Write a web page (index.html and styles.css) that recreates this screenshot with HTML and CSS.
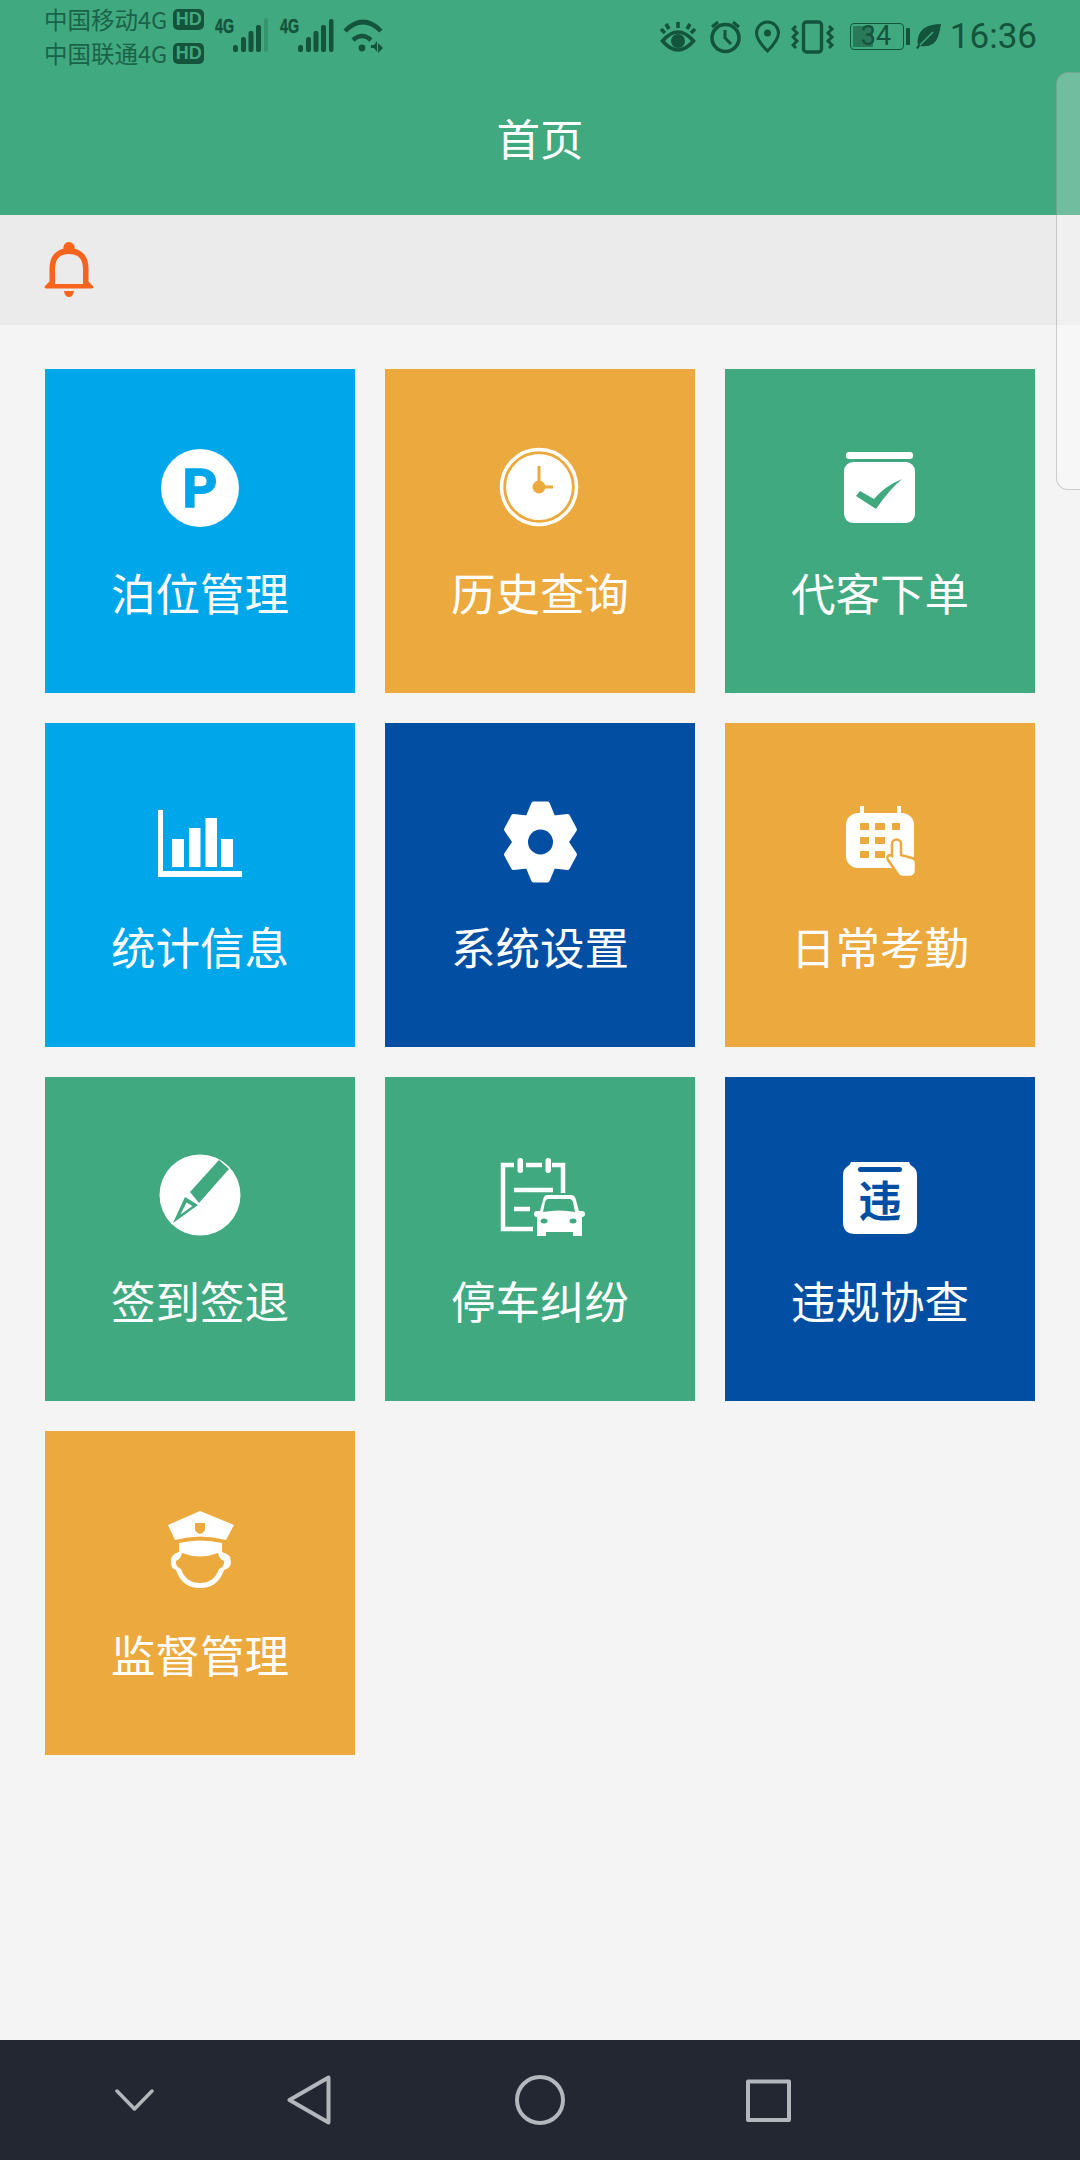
FILE: index.html
```html
<!DOCTYPE html>
<html>
<head>
    <title>首页</title>
    <meta charset="utf-8" />
    <link rel="stylesheet" href="styles.css">
</head>
<body>
    <div class="sayfa">
        <header class="ust">
            <div class="durum">
                <div class="operator">
                    <div class="hat"><span>中国移动4G</span><b class="hd">HD</b></div>
                    <div class="hat"><span>中国联通4G</span><b class="hd">HD</b></div>
                </div>
                <svg class="sinyal" width="170" height="40" viewBox="215 15 170 40">
                    <g class="koyu">
                        <text x="215" y="33" class="dort-g" textLength="19" lengthAdjust="spacingAndGlyphs">4G</text>
                        <rect x="233" y="45" width="5" height="7" rx="2"/>
                        <rect x="241" y="37" width="5" height="15" rx="2"/>
                        <rect x="248.500" y="31" width="5" height="21" rx="2"/>
                        <rect x="256" y="25" width="5" height="27" rx="2"/>
                        <rect x="264" y="18" width="4" height="34" rx="2" opacity="0.25"/>
                        <text x="280" y="33" class="dort-g" textLength="19" lengthAdjust="spacingAndGlyphs">4G</text>
                        <rect x="298" y="45" width="5" height="7" rx="2"/>
                        <rect x="306" y="37" width="5" height="15" rx="2"/>
                        <rect x="313.500" y="31" width="5" height="21" rx="2"/>
                        <rect x="321" y="25" width="5" height="27" rx="2"/>
                        <rect x="329" y="19" width="4.500" height="33" rx="2"/>
                        <circle cx="362" cy="48" r="3.400"/>
                        <path d="M371 45h3l3-4v11l-3-4h-3zM378 43l5 5-5 5z"/>
                    </g>
                    <path class="cizgi" d="M345 31q18-18 36 0M353 40q9-8 18 0" stroke-width="4.500"/>
                </svg>
                <div class="sag-ikonlar">
                    <svg class="goz" width="37" height="36" viewBox="662 18 37 36">
                        <path class="cizgi" d="M664.500 41q15.500-18 31 0q-15.500 18-31 0zM680 22v6M668 24l3 5M692 24l-3 5M663 29l4 4M697 29l-4 4" stroke-width="3.600"/>
                        <circle class="koyu" cx="680" cy="41" r="7"/>
                    </svg>
                    <svg class="saat" width="36" height="36" viewBox="709 18 36 36">
                        <circle class="cizgi" cx="726.500" cy="38" r="13.500" stroke-width="3.600"/>
                        <path class="cizgi" d="M726 30v8l6 6M713 27l6-5M740 27l-6-5" stroke-width="3"/>
                    </svg>
                    <svg class="konum" width="28" height="36" viewBox="755 18 28 36">
                        <path class="cizgi" d="M768.500 51q-11-11-11-18a11 11 0 0 1 22 0q0 7-11 18z" stroke-width="3"/>
                        <circle class="koyu" cx="768.500" cy="33" r="3.500"/>
                    </svg>
                    <svg class="titresim" width="44" height="36" viewBox="792 18 44 36">
                        <rect class="cizgi" x="804.500" y="22" width="18" height="30" rx="3" stroke-width="3.400"/>
                        <path class="cizgi" d="M797 26l-3 3 4 4-4 4 4 4-4 4 3 3M830 26l3 3-4 4 4 4-4 4 4 4-3 3" stroke-width="3"/>
                    </svg>
                    <div class="pil">
                        <div class="pil-dolu"></div>
                        <span class="pil-yazi">34</span>
                    </div>
                    <div class="pil-uc"></div>
                    <svg class="yaprak" width="26" height="26" viewBox="917 23 26 26">
                        <path class="koyu" d="M942 24q-20 0-23 14-1 4 0 7l-2 3 2 1 2-3q14 2 18-9 2-6 3-13z"/>
                        <path d="M921 45l13-13" stroke="#41a97f" stroke-width="1.500" fill="none"/>
                    </svg>
                    <span class="zaman">16:36</span>
                </div>
            </div>
            <h1 class="baslik">首页</h1>
        </header>

        <div class="bildirim">
            <svg width="50" height="58" viewBox="44 241 50 58">
                <path d="M69 242a5.500 5.500 0 0 1 5.500 6.500q14 4 14 20v13l4.500 4.500q1 2-1 2.500h-46q-2-.5-1-2.500l4.500-4.500v-13q0-16 14-20a5.500 5.500 0 0 1 5.500-6.500zM69 254q-14 0-14 15v15h28v-15q0-15-14-15zM64 291h10q-1 6-5 6t-5-6z" fill="#f8631e" fill-rule="evenodd"/>
            </svg>
        </div>

        <main class="izgara">
            <a class="kutu mavi">
                <svg class="ikon" viewBox="0 0 100 100">
                    <circle cx="50" cy="50" r="39" fill="#fff"/>
                    <text x="50" y="69" class="ikon-harf kalin" fill="#00a6ea" font-size="54">P</text>
                </svg>
                <span>泊位管理</span>
            </a>
            <a class="kutu turuncu">
                <svg class="ikon" viewBox="0 0 100 100">
                    <circle cx="49" cy="49" r="37.500" fill="none" stroke="#fff" stroke-width="3.500"/>
                    <circle cx="49" cy="49" r="33" fill="#fff"/>
                    <path d="M49 28v21h14" fill="none" stroke="#eca93d" stroke-width="3"/>
                    <circle cx="49" cy="49" r="6.500" fill="#eca93d"/>
                </svg>
                <span>历史查询</span>
            </a>
            <a class="kutu yesil">
                <svg class="ikon" viewBox="0 0 100 100">
                    <rect x="16" y="14" width="67" height="7" rx="3" fill="#fff"/>
                    <rect x="14" y="24" width="71" height="61" rx="9" fill="#fff"/>
                    <path d="M26 58l4-5 14 8q11-13 28-20-13 11-26 30z" fill="#41a97f"/>
                </svg>
                <span>代客下单</span>
            </a>

            <a class="kutu mavi">
                <svg class="ikon" viewBox="0 0 100 100">
                    <path d="M8 18h5v61h79v6H8z" fill="#fff"/>
                    <rect x="22" y="47" width="12" height="28" fill="#fff"/>
                    <rect x="39" y="36" width="11.500" height="39" fill="#fff"/>
                    <rect x="55.500" y="26" width="11.500" height="49" fill="#fff"/>
                    <rect x="71" y="47" width="12" height="28" fill="#fff"/>
                </svg>
                <span>统计信息</span>
            </a>
            <a class="kutu lacivert">
                <svg class="ikon" viewBox="0 0 100 100">
                    <g transform="translate(50.500 50) scale(.93 1) translate(-50.500 -50)">
                        <g fill="#fff" stroke="#fff" stroke-width="5" stroke-linejoin="round">
                            <path d="M43 12h15l8 18H35z"/>
                            <path d="M43 12h15l8 18H35z" transform="rotate(60 50.500 50)"/>
                            <path d="M43 12h15l8 18H35z" transform="rotate(120 50.500 50)"/>
                            <path d="M43 12h15l8 18H35z" transform="rotate(180 50.500 50)"/>
                            <path d="M43 12h15l8 18H35z" transform="rotate(240 50.500 50)"/>
                            <path d="M43 12h15l8 18H35z" transform="rotate(300 50.500 50)"/>
                        </g>
                        <circle cx="50.500" cy="50" r="30" fill="#fff"/>
                    </g>
                    <circle cx="50.500" cy="50" r="12.500" fill="#024ea2"/>
                </svg>
                <span>系统设置</span>
            </a>
            <a class="kutu turuncu">
                <svg class="ikon" viewBox="0 0 100 100">
                    <rect x="16" y="21" width="68" height="55" rx="12" fill="#fff"/>
                    <path d="M30 14h4v9h-4zM67 14h4v9h-4z" fill="#fff"/>
                    <g fill="#eca93d">
                        <rect x="30" y="31" width="9" height="7"/><rect x="45" y="31" width="10" height="7"/><rect x="62" y="31" width="8" height="7"/>
                        <rect x="30" y="45" width="9" height="7"/><rect x="45" y="45" width="10" height="7"/>
                        <rect x="30" y="59" width="9" height="7"/><rect x="45" y="59" width="10" height="7"/>
                    </g>
                    <path d="M62 52a4.500 4.500 0 0 1 9 0v11l11 3q4 1 4 5v7q0 7-7 7h-6q-4 0-6-4l-9-13q-2-4 2-5l2 1z" fill="#fff" stroke="#eca93d" stroke-width="2.500"/>
                </svg>
                <span>日常考勤</span>
            </a>

            <a class="kutu yesil">
                <svg class="ikon" viewBox="0 0 100 100">
                    <circle cx="50" cy="49" r="40.500" fill="#fff"/>
                    <path d="M69 14l10 9-30 34-9-11z" fill="#41a97f"/>
                    <path d="M35 51l13 8-25 18zM36.500 56.500l-6 12 12-8.500z" fill="#41a97f" fill-rule="evenodd"/>
                </svg>
                <span>签到签退</span>
            </a>
            <a class="kutu yesil">
                <svg class="ikon" viewBox="0 0 100 100">
                    <path d="M24 19H13v64h30M36 19h16M62 19h11v28M24 44h39M24 63h16" fill="none" stroke="#fff" stroke-width="4.500"/>
                    <rect x="27.500" y="12" width="5.500" height="15" rx="2.700" fill="#fff"/>
                    <rect x="55.500" y="12" width="5.500" height="15" rx="2.700" fill="#fff"/>
                    <path d="M57 49h24q4 0 5 5l3 11h3q3 0 3 3t-3 3v19h-9v-4H56v4h-9V71q-3 0-3-3t3-3h3l3-11q1-5 4-5z" fill="#fff"/>
                    <path d="M58 53h22q2 0 3 3l2 10q-16-3-32 0l2-10q1-3 3-3z" fill="#41a97f"/>
                    <ellipse cx="54" cy="75" rx="3.500" ry="2.500" fill="#41a97f"/>
                    <ellipse cx="83" cy="75" rx="3.500" ry="2.500" fill="#41a97f"/>
                </svg>
                <span>停车纠纷</span>
            </a>
            <a class="kutu lacivert">
                <svg class="ikon" viewBox="0 0 100 100">
                    <path d="M21 16h58q1 3 3 4 5 3 5 9v47q0 12-12 12H25q-12 0-12-12V29q0-6 5-9 2-1 3-4z" fill="#fff"/>
                    <rect x="28" y="21" width="44" height="5" rx="2.500" fill="#024ea2"/>
                    <text x="50" y="71" class="ikon-harf cjk" fill="#024ea2" font-size="43">违</text>
                </svg>
                <span>违规协查</span>
            </a>

            <a class="kutu turuncu">
                <svg class="ikon" viewBox="0 0 100 100">
                    <path d="M50 11L84 25l-8 15Q50 33 25 40l-7-15z" fill="#fff"/>
                    <path d="M45 23h10v6q0 3-5 5-5-2-5-5z" fill="#eca93d"/>
                    <path d="M29 43q21-5 43 0v9q9 2 9 10 0 6-7 8-6 18-24 18T26 70q-6-2-5-9 0-7 8-9z" fill="#fff"/>
                    <path d="M32 53q18 7 36 0 1 6 6 8 1 5-5 8-5 14-19 14T31 69q-6-3-5-8 5-2 6-8z" fill="#eca93d"/>
                </svg>
                <span>监督管理</span>
            </a>
        </main>

        <nav class="alt">
            <svg class="nav-asagi" width="39" height="22" viewBox="0 0 39 22">
                <path d="M2 2l17.500 18L37 2" fill="none" stroke="#b3b6bb" stroke-width="3.500" stroke-linecap="round" stroke-linejoin="round"/>
            </svg>
            <svg class="nav-geri" width="44" height="50" viewBox="0 0 44 50">
                <path d="M41.500 2.500v45L2.500 25z" fill="none" stroke="#b3b6bb" stroke-width="4" stroke-linejoin="round"/>
            </svg>
            <svg class="nav-ev" width="50" height="50" viewBox="0 0 50 50">
                <circle cx="25" cy="25" r="23" fill="none" stroke="#b3b6bb" stroke-width="4"/>
            </svg>
            <svg class="nav-kare" width="45" height="45" viewBox="0 0 45 45">
                <path d="M2 4.500h41v38.500H2z" fill="none" stroke="#b3b6bb" stroke-width="4" stroke-linejoin="round"/>
            </svg>
        </nav>

        <div class="yan-panel"></div>
    </div>
</body>
</html>
```

FILE: styles.css
```css
* {box-sizing: border-box;}
body {margin: 0; background-color: #f4f4f4; font-family: "Noto Sans CJK SC", "Noto Sans", sans-serif;}

.sayfa {
    position: relative;
    display: flex;
    flex-direction: column;
    width: 1080px;
    height: 2160px;
    overflow: hidden;
}

/* ust bolum */
.ust {height: 215px; background-color: #41a97f;}
.durum {display: flex; align-items: flex-start; height: 72px; color: #14543c;}
.operator {padding: 2px 0 0 44px; width: 215px; font-size: 23.5px; color: #1a6349;}
.hat {display: flex; align-items: center; height: 34px; line-height: 33px;}
.hd {
    flex: none;
    margin-left: 6px;
    width: 31px;
    height: 21px;
    border-radius: 5px;
    background-color: #14543c;
    color: #41a97f;
    font: bold 18px/21px "Liberation Sans", sans-serif;
    text-align: center;
}
.sinyal {margin-top: 15px;}
.koyu {fill: #14543c;}
.cizgi {fill: none; stroke: #14543c;}
.dort-g {font: bold 20px "Liberation Sans", sans-serif; stroke: #14543c; stroke-width: 0.5px;}

.sag-ikonlar {display: flex; align-items: flex-start; margin-left: auto; padding-top: 18px;}
.saat {margin-left: 11px;}
.konum {margin-left: 10px;}
.titresim {margin-left: 9px;}
.pil {
    position: relative;
    margin: 5px 0 0 15px;
    padding: 2px;
    width: 54px;
    height: 27px;
    border: 1.5px solid #14543c;
    border-radius: 4px;
}
.pil-dolu {width: 20px; height: 100%; background-color: #2a7a5a;}
.pil-yazi {
    position: absolute;
    top: -1px;
    left: 10px;
    color: #14543c;
    font: 27px/26px Roboto, sans-serif;
}
.pil-uc {margin: 10px 0 0 2px; width: 4px; height: 17px; border-radius: 1px; background-color: #14543c;}
.yaprak {margin: 5px 0 0 6px;}
.zaman {margin: 1px 43px 0 8px; font: 35px/36px Roboto, sans-serif;}

.baslik {
    margin: 0;
    color: #fff;
    font-size: 43.5px;
    font-weight: 400;
    line-height: 132px;
    text-align: center;
}

/* bildirim seridi */
.bildirim {display: flex; align-items: flex-start; padding: 26px 0 0 44px; height: 110px; background-color: #ebebeb;}

/* menu */
.izgara {
    display: grid;
    grid-template-columns: repeat(3, 310px);
    grid-auto-rows: 324px;
    gap: 30px;
    padding: 44px 45px 0;
    flex: 1;
}
.kutu {
    display: flex;
    flex-direction: column;
    align-items: center;
    padding-top: 69px;
    color: #fff;
    font-size: 44.500px;
    line-height: 64px;
}
.kutu span {margin-top: 22px;}
.ikon {display: block; width: 100px; height: 100px;}
.ikon-harf {font-family: Roboto, sans-serif; font-weight: 700; text-anchor: middle;}
.ikon-harf.kalin {stroke: #00a6ea; stroke-width: 1.5px;}
.ikon-harf.cjk {font-family: "Noto Sans CJK SC", sans-serif;}
.mavi {background-color: #00a6ea;}
.turuncu {background-color: #eca93d;}
.yesil {background-color: #41a97f;}
.lacivert {background-color: #024ea2;}

/* alt gezinme */
.alt {display: flex; align-items: flex-start; height: 120px; padding-left: 115px; background-color: #222732;}
.nav-asagi {margin-top: 49px;}
.nav-geri {margin: 35px 0 0 133px;}
.nav-ev {margin: 35px 0 0 184px;}
.nav-kare {margin: 37px 0 0 181px;}

/* sagdaki yari saydam panel */
.yan-panel {
    position: absolute;
    top: 72px;
    right: -12px;
    width: 36px;
    height: 418px;
    border: 1px solid rgba(120, 120, 120, 0.35);
    border-radius: 12px;
    background-color: rgba(255, 255, 255, 0.25);
}
```
